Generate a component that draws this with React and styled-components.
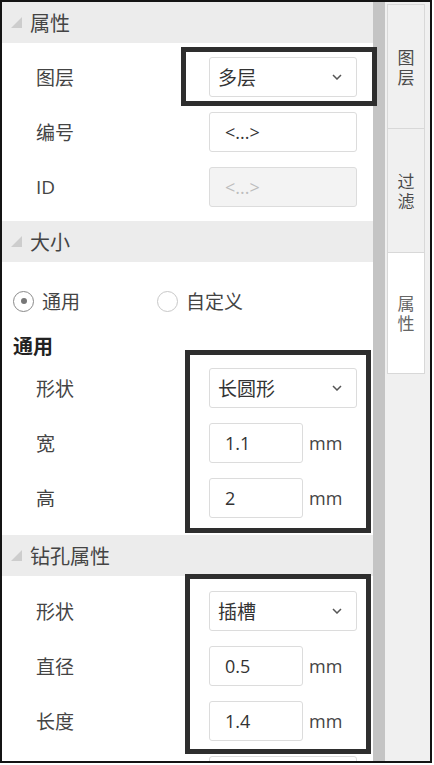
import styled, { createGlobalStyle } from 'styled-components';

const GlobalStyle = createGlobalStyle`
  html, body {
    margin: 0;
    padding: 0;
    background: #fff;
  }
  body {
    font-family: "Open Sans", "Noto Sans CJK SC", sans-serif;
  }
`;

const Frame = styled.div`
  width: 432px;
  height: 763px;
  box-sizing: border-box;
  border: 2px solid #141414;
  display: flex;
  overflow: hidden;
`;

const Panel = styled.div`
  width: 371px;
  flex: none;
  background: #fff;
`;

const Scrollbar = styled.div`
  width: 12px;
  flex: none;
  background: #c4c4c4;
`;

const TabBar = styled.div`
  flex: 1;
  background: #f0f0f0;
  padding: 2px 5px 0 2px;
  display: flex;
  flex-direction: column;
`;

const Tab = styled.div`
  height: ${props => props.h}px;
  box-sizing: border-box;
  border: 1px solid #d8d8d8;
  margin-top: -1px;
  &:first-child { margin-top: 0; }
  background: ${props => (props.active ? '#fff' : '#f0f0f0')};
  color: ${props => (props.active ? '#666' : '#4a4a4a')};
  display: flex;
  align-items: center;
  justify-content: center;
`;

const TabLabel = styled.span`
  width: 1em;
  font-family: "Noto Sans CJK SC", sans-serif;
  font-size: 17px;
  line-height: 20px;
  text-align: center;
  word-break: break-all;
`;

const Header = styled.div`
  height: 41px;
  background: #ececec;
  display: flex;
  align-items: center;
  padding-left: 8px;
  gap: 7px;
  font-size: 20px;
  color: #444;
`;

const Body = styled.div`
  padding: ${props => props.pad};
  display: flex;
  flex-direction: column;
`;

const Group = styled.div`
  position: relative;
  display: flex;
  flex-direction: column;
  gap: 15px;
  margin-top: ${props => props.mt || 0}px;
`;

const Highlight = styled.div`
  position: absolute;
  z-index: 2;
  left: ${props => props.l}px;
  width: ${props => props.w}px;
  top: ${props => props.t}px;
  bottom: ${props => props.b}px;
  border: 5px solid #2e2e2e;
  box-sizing: border-box;
  pointer-events: none;
`;

const Row = styled.div`
  display: flex;
  align-items: center;
  height: 40px;
  padding-left: 34px;
`;

const Label = styled.div`
  width: 173px;
  flex: none;
  font-size: 19px;
  color: #444;
`;

const Select = styled.div`
  width: 148px;
  height: 40px;
  box-sizing: border-box;
  border: 1px solid #dcdcdc;
  border-radius: 3px;
  padding: 0 14px 0 8px;
  display: flex;
  align-items: center;
  justify-content: space-between;
  font-size: 19px;
  color: #333;
`;

const Input = styled.div`
  width: ${props => props.w || 148}px;
  height: 40px;
  box-sizing: border-box;
  border: 1px solid #dcdcdc;
  border-radius: 3px;
  padding-left: 15px;
  display: flex;
  align-items: center;
  font-size: 18px;
  color: ${props => (props.disabled ? '#bdbdbd' : '#333')};
  background: ${props => (props.disabled ? '#f3f3f3' : '#fff')};
`;

const Unit = styled.span`
  margin-left: 6px;
  font-size: 18px;
  color: #444;
`;

const RadioRow = styled.div`
  display: flex;
  align-items: center;
  height: 22px;
  padding-left: 11px;
`;

const RadioOption = styled.div`
  width: ${props => props.w}px;
  display: flex;
  align-items: center;
  gap: 8px;
  font-size: 19px;
  color: #444;
`;

const RadioCircle = styled.span`
  width: 21px;
  height: 21px;
  box-sizing: border-box;
  border-radius: 50%;
  border: 1.5px solid ${props => (props.checked ? '#8a8a8a' : '#c8c8c8')};
  display: flex;
  align-items: center;
  justify-content: center;
  &::after {
    content: '';
    width: 6px;
    height: 6px;
    border-radius: 50%;
    background: ${props => (props.checked ? '#777' : 'transparent')};
  }
`;

const SubTitle = styled.div`
  margin-top: 22px;
  padding-left: 11px;
  line-height: 26px;
  font-size: 20px;
  font-weight: bold;
  color: #222;
`;

const Chevron = () => (
  <svg width="10" height="6" viewBox="0 0 10 6">
    <path d="M1 1 L5 5 L9 1" fill="none" stroke="#555" strokeWidth="1.5" />
  </svg>
);

const SectionHeader = ({ title }) => (
  <Header>
    <svg width="13" height="13" viewBox="0 0 13 13">
      <path d="M12 1 L12 12 L1 12 Z" fill="#cdcdcd" />
    </svg>
    {title}
  </Header>
);

const App = () => {
  return (
    <>
      <GlobalStyle />
      <Frame>
        <Panel>
          <SectionHeader title="属性" />
          <Body pad="14px 0">
            <Group>
              <Highlight l={179} w={196} t={-10} b={-9} />
              <Row>
                <Label>图层</Label>
                <Select>多层<Chevron /></Select>
              </Row>
            </Group>
            <Group mt={15}>
              <Row>
                <Label>编号</Label>
                <Input>&lt;...&gt;</Input>
              </Row>
              <Row>
                <Label>ID</Label>
                <Input disabled>&lt;...&gt;</Input>
              </Row>
            </Group>
          </Body>

          <SectionHeader title="大小" />
          <Body pad="28px 0 17px">
            <RadioRow>
              <RadioOption w={144}><RadioCircle checked />通用</RadioOption>
              <RadioOption w={150}><RadioCircle />自定义</RadioOption>
            </RadioRow>
            <SubTitle>通用</SubTitle>
            <Group mt={8}>
              <Highlight l={183} w={186} t={-18} b={-15} />
              <Row>
                <Label>形状</Label>
                <Select>长圆形<Chevron /></Select>
              </Row>
              <Row>
                <Label>宽</Label>
                <Input w={94}>1.1</Input>
                <Unit>mm</Unit>
              </Row>
              <Row>
                <Label>高</Label>
                <Input w={94}>2</Input>
                <Unit>mm</Unit>
              </Row>
            </Group>
          </Body>

          <SectionHeader title="钻孔属性" />
          <Body pad="15px 0">
            <Group>
              <Highlight l={183} w={186} t={-17} b={-13} />
              <Row>
                <Label>形状</Label>
                <Select>插槽<Chevron /></Select>
              </Row>
              <Row>
                <Label>直径</Label>
                <Input w={94}>0.5</Input>
                <Unit>mm</Unit>
              </Row>
              <Row>
                <Label>长度</Label>
                <Input w={94}>1.4</Input>
                <Unit>mm</Unit>
              </Row>
            </Group>
            <Group mt={15}>
              <Row>
                <Label />
                <Input />
              </Row>
            </Group>
          </Body>
        </Panel>
        <Scrollbar />
        <TabBar>
          <Tab h={125}><TabLabel>图层</TabLabel></Tab>
          <Tab h={125}><TabLabel>过滤</TabLabel></Tab>
          <Tab h={122} active><TabLabel>属性</TabLabel></Tab>
        </TabBar>
      </Frame>
    </>
  );
};

export default App;
